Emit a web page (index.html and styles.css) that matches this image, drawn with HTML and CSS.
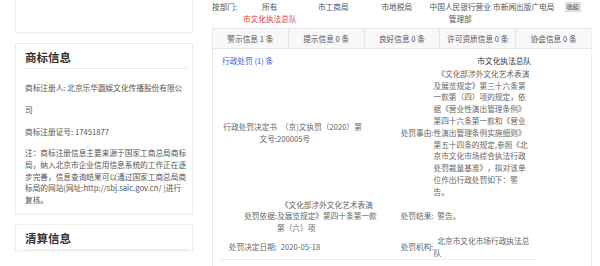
FILE: index.html
```html
<!DOCTYPE html>
<html lang="zh-CN">
<head>
<meta charset="utf-8">
<title>企业信用信息</title>
<link rel="stylesheet" href="styles.css">
</head>
<body>
<div class="page">
  <aside class="side">
    <section class="card card-top"></section>
    <section class="card">
      <h2 class="card-title">商标信息</h2>
      <div class="card-body">
        <p class="kv">商标注册人: 北京乐华圆娱文化传播股份有限公<br>司</p>
        <p class="kv">商标注册证号: 17451877</p>
        <p class="note">注：商标注册信息主要来源于国家工商总局商标<br>局，纳入北京市企业信用信息系统的工作正在逐<br>步完善，信息查询结果可以通过国家工商总局商<br>标局的网站(网址:http://sbj.saic.gov.cn/ )进行<br>复核。</p>
      </div>
    </section>
    <section class="card">
      <h2 class="card-title">清算信息</h2>
    </section>
  </aside>

  <main class="main">
    <div class="filter">
      <span class="filter-label">按部门:</span>
      <ul class="dept-list">
        <li>所有</li>
        <li>市工商局</li>
        <li>市地税局</li>
        <li>中国人民银行营业管理部</li>
        <li>市新闻出版广电局</li>
        <li class="active">市文化执法总队</li>
      </ul>
      <button class="collapse" type="button">收起</button>
    </div>

    <div class="panel">
      <ul class="tabs">
        <li>警示信息 1 条</li>
        <li>提示信息 0 条</li>
        <li>良好信息 0 条</li>
        <li>许可资质信息 0 条</li>
        <li>协会信息 0 条</li>
      </ul>
      <div class="panel-body">
        <div class="record">
          <a class="record-link">行政处罚 (1) 条</a>
          <div class="record-org">市文化执法总队</div>

          <div class="lbl">行政处罚决定书文号:</div>
          <div class="val">（京)文执罚（2020）第200005号</div>
          <div class="lbl">处罚事由:</div>
          <div class="val">《文化部涉外文化艺术表演及展览规定》第三十六条第一款第（四）项的规定，依据《营业性演出管理条例》第四十六条第一款和《营业性演出管理条例实施细则》第五十四条的规定,参照《北京市文化市场综合执法行政处罚裁量基准》，拟对该单位作出行政处罚如下：警告。</div>

          <div class="lbl">处罚依据:</div>
          <div class="val">《文化部涉外文化艺术表演及展览规定》第四十条第一款第（六）项</div>
          <div class="lbl">处罚结果:</div>
          <div class="val">警告。</div>

          <div class="lbl">处罚决定日期:</div>
          <div class="val">2020-05-18</div>
          <div class="lbl">处罚机构:</div>
          <div class="val">北京市文化市场行政执法总队</div>
        </div>
      </div>
    </div>
  </main>
</div>
</body>
</html>
```

FILE: styles.css
```css
html, body {
  margin: 0;
  padding: 0;
  background: #ffffff;
}

body {
  font-family: "Noto Sans CJK SC", "Noto Sans", sans-serif;
  font-size: 7.68px;
  color: #555;
  text-spacing-trim: space-all;
  overflow: hidden;
}

ul {
  list-style: none;
  margin: 0;
  padding: 0;
}

.page {
  display: flex;
  align-items: flex-start;
  gap: 19px;
  padding-left: 15px;
}

/* ---------- left column ---------- */
.side {
  width: 178px;
  flex: none;
  display: flex;
  flex-direction: column;
  gap: 10px;
}

.card {
  background: #fff;
  border: 1px solid #efefef;
  box-shadow: 0 1px 3px rgba(0, 0, 0, 0.04);
  padding: 0 3px 0 9px;
}

.card-top {
  height: 32px;
  border-top: 0;
}

.card-title {
  margin: 0;
  padding: 5px 0 3px;
  font-size: 11.5px;
  line-height: 16px;
  font-weight: 700;
  color: #333;
  border-bottom: 1px solid #eeeeee;
}

.card-body {
  padding: 8px 0 7px;
}

.kv {
  margin: 0;
  line-height: 22px;
  white-space: nowrap;
  color: #555;
}

.note {
  margin: 4px 0 0;
  line-height: 11.8px;
  white-space: nowrap;
  color: #555;
}

/* ---------- right column ---------- */
.main {
  width: 380px;
  flex: none;
}

.filter {
  display: flex;
  align-items: flex-start;
  padding-top: 1px;
  margin-bottom: 4px;
  line-height: 11.5px;
  color: #555;
}

.filter-label {
  width: 26px;
  flex: none;
}

.dept-list {
  display: grid;
  grid-template-columns: repeat(5, 63.5px);
  grid-auto-rows: 11.5px;
  text-align: center;
}

.dept-list .active {
  color: #e4393c;
}

.collapse {
  margin: 1px 0 0 9px;
  padding: 1px 2px;
  border: 0;
  background: #dedede;
  color: #555;
  font-family: inherit;
  font-size: 6px;
  line-height: 8px;
}

.panel {
  border-left: 1px solid #e8e8e8;
  border-right: 1px solid #efefef;
}

.tabs {
  display: flex;
  background: #f8f8f8;
  border-top: 1px solid #e6e6e6;
  border-bottom: 1px solid #e6e6e6;
}

.tabs li {
  flex: 1;
  text-align: center;
  line-height: 19px;
  color: #555;
  border-right: 1px solid #e6e6e6;
}

.tabs li:last-child {
  border-right: 0;
}

.panel-body {
  padding: 6px 0 20px 7px;
}

.record {
  display: grid;
  grid-template-columns: 57px 101.5px 55px 97.5px;
  row-gap: 1px;
  align-items: center;
  width: max-content;
  padding-right: 4px;
  line-height: 11.8px;
  color: #666;
  border-bottom: 1px solid #eeeeee;
}

.record-link {
  grid-column: 1 / span 2;
  padding-left: 2px;
  color: #3f5fd6;
  cursor: pointer;
}

.record-org {
  grid-column: 4;
  text-align: right;
  color: #333;
}

.lbl {
  text-align: right;
}

.val {
  text-align: left;
  text-indent: 0.5em;
}
```
